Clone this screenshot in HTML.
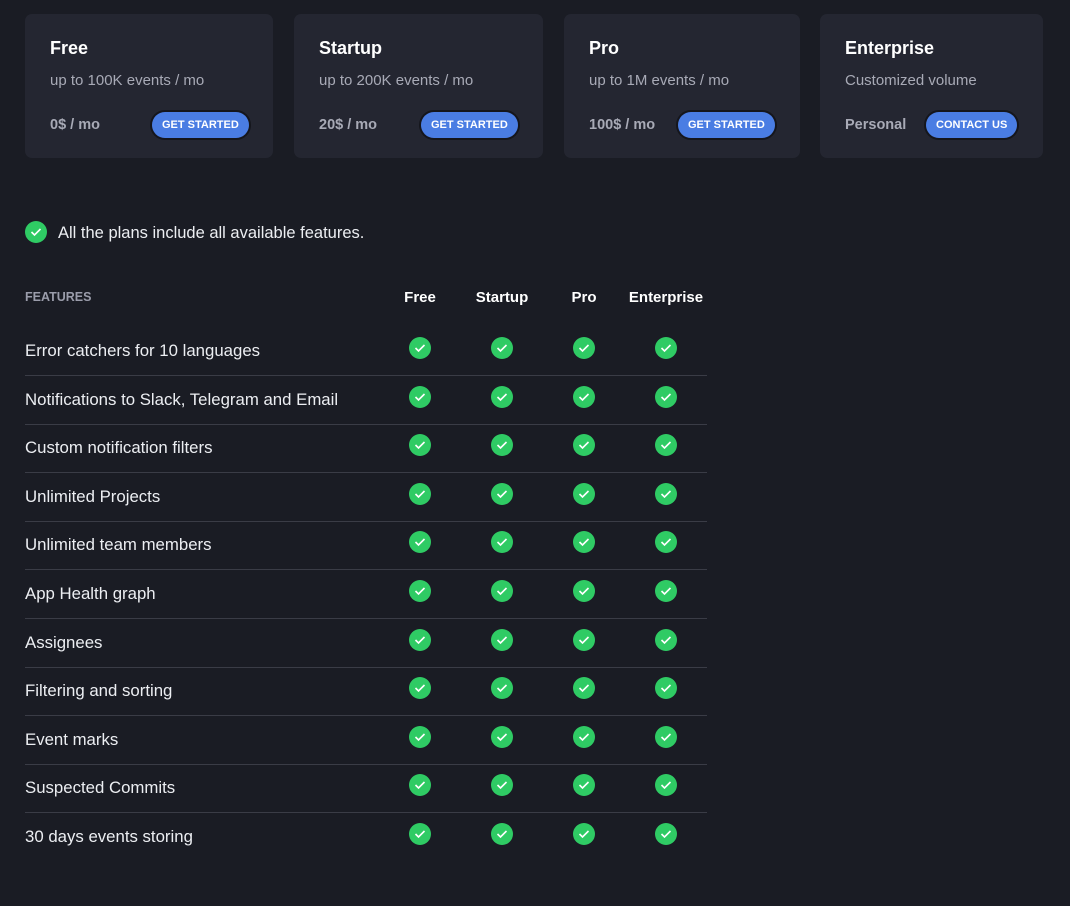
<!DOCTYPE html>
<html><head><style>
body{margin:0;background:#1a1c24;width:1070px;height:906px;overflow:hidden;font-family:"Liberation Sans",sans-serif;color:#e6e7ec;position:relative}
.card{position:absolute;top:14px;height:144px;background:#242631;border-radius:7px}
.card .t{position:absolute;left:25px;top:24px;font-size:18px;font-weight:bold;color:#fff}
.card .s{position:absolute;left:25px;top:58px;font-size:15px;color:#a8aab6}
.card .p{position:absolute;left:25px;top:103px;font-size:14.5px;color:#a8aab6;font-weight:bold}
.btn{position:absolute;top:98px;height:26px;line-height:26px;padding:0 10px;background:#4a7de3;border-radius:13px;font-size:11px;font-weight:bold;color:#fff;box-shadow:0 0 0 2px #15161c}
.ck{position:absolute;width:22px;height:22px;border-radius:50%;background:#2fcb64;display:flex;align-items:center;justify-content:center}
.row{position:absolute;left:25px;font-size:16.8px;color:#eceef2}
.line{position:absolute;left:25px;width:682px;height:1px;background:#3a3c46}
.h{position:absolute;top:289px;font-size:15px;font-weight:bold;color:#fff;transform:translateX(-50%)}
</style></head><body>
<div class="card" style="left:25px;width:248px"><div class="t">Free</div><div class="s">up to 100K events / mo</div><div class="p">0$ / mo</div><div class="btn" style="left:127px">GET STARTED</div></div>
<div class="card" style="left:294px;width:249px"><div class="t">Startup</div><div class="s">up to 200K events / mo</div><div class="p">20$ / mo</div><div class="btn" style="left:127px">GET STARTED</div></div>
<div class="card" style="left:564px;width:236px"><div class="t">Pro</div><div class="s">up to 1M events / mo</div><div class="p">100$ / mo</div><div class="btn" style="left:114px">GET STARTED</div></div>
<div class="card" style="left:820px;width:223px"><div class="t">Enterprise</div><div class="s">Customized volume</div><div class="p">Personal</div><div class="btn" style="left:106px">CONTACT US</div></div>
<div class="ck" style="left:25px;top:221px"><svg width="12" height="10" viewBox="0 0 12 10"><path d="M1.5 5l3 3 6-6" fill="none" stroke="#fff" stroke-width="1.6"/></svg></div>
<div style="position:absolute;left:58px;top:224px;font-size:16.5px;color:#eceef2">All the plans include all available features.</div>
<div style="position:absolute;left:25px;top:290px;font-size:12.5px;font-weight:bold;color:#9a9caa">FEATURES</div>
<div class="h" style="left:420px">Free</div><div class="h" style="left:502px">Startup</div><div class="h" style="left:584px">Pro</div><div class="h" style="left:666px">Enterprise</div>
<div id="rows"></div>
<script>
var f=["Error catchers for 10 languages","Notifications to Slack, Telegram and Email","Custom notification filters","Unlimited Projects","Unlimited team members","App Health graph","Assignees","Filtering and sorting","Event marks","Suspected Commits","30 days events storing"];
var h="";
f.forEach(function(t,i){var c=350+i*48.6;
h+='<div class="row" style="top:'+(c-9)+'px">'+t+'</div>';
[420,502,584,666].forEach(function(x){h+='<div class="ck" style="left:'+(x-11)+'px;top:'+(c-13)+'px"><svg width="12" height="10" viewBox="0 0 12 10"><path d="M1.5 5l3 3 6-6" fill="none" stroke="#fff" stroke-width="1.6"/></svg></div>';});
if(i<10)h+='<div class="line" style="top:'+Math.round(c+25)+'px"></div>';});
document.getElementById("rows").innerHTML=h;
</script>
</body></html>
